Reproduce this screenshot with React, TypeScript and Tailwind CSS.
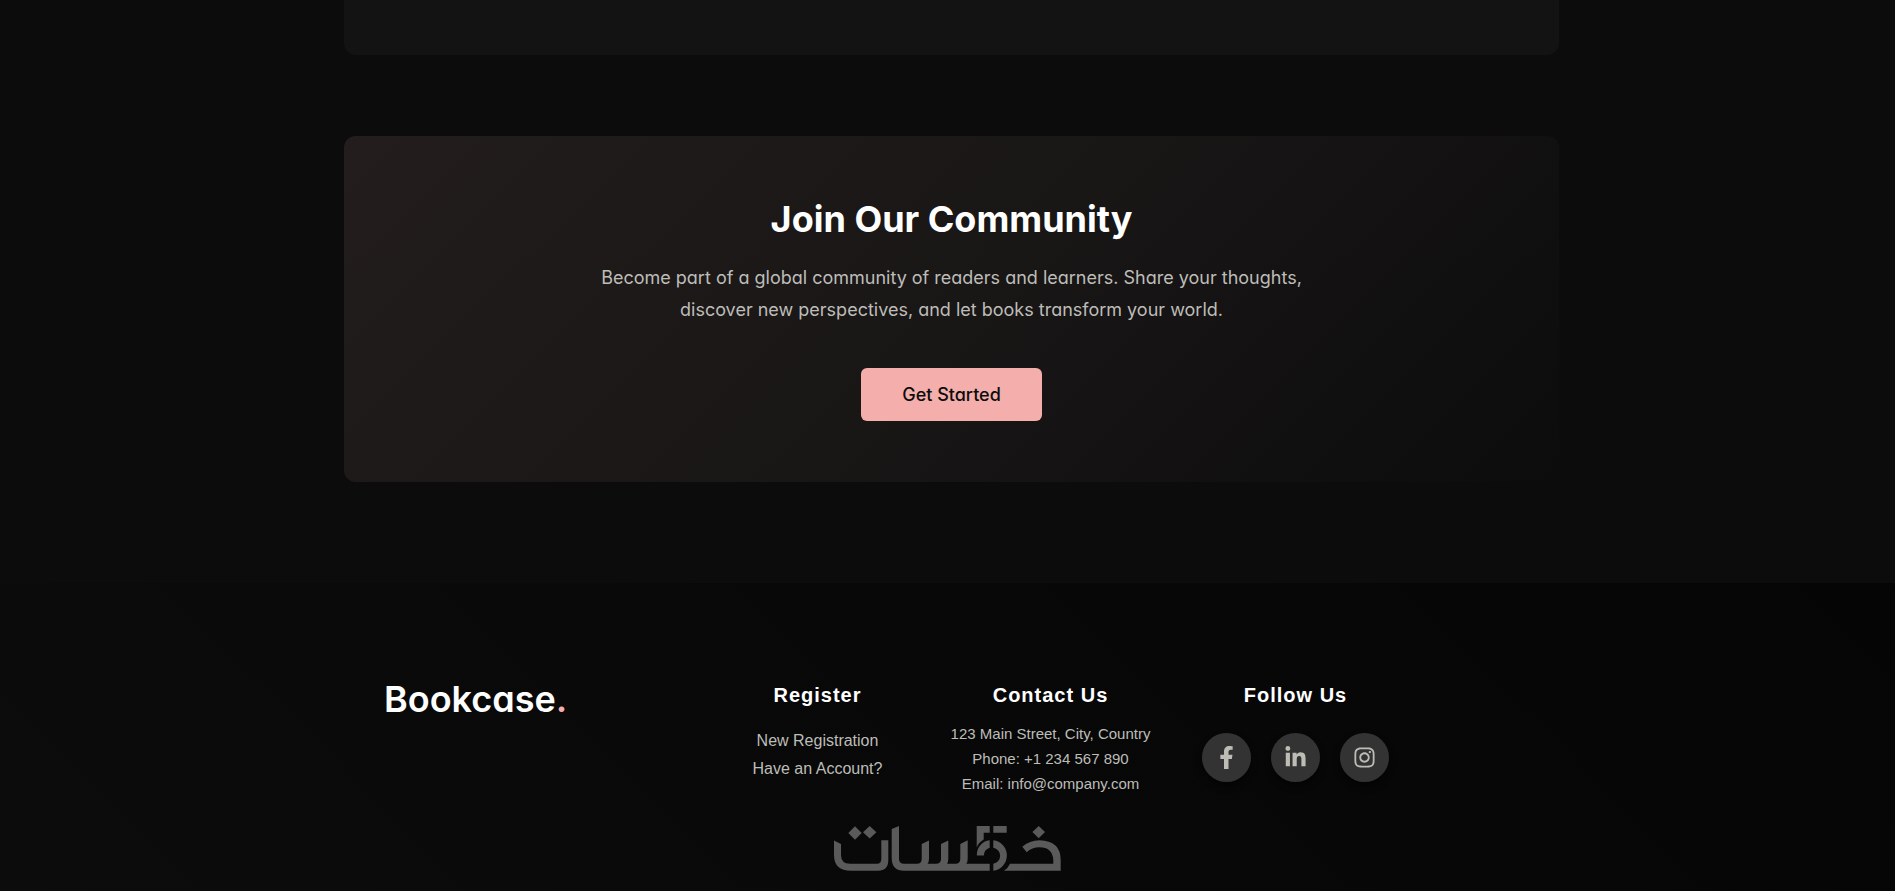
import { FaFacebookF, FaLinkedinIn, FaInstagram } from "react-icons/fa";

const registerLinks = [
  { href: "#register", label: "New Registration" },
  { href: "#login",    label: "Have an Account?" },
];

const contactLines = [
  "123 Main Street, City, Country",
  "Phone: +1 234 567 890",
  "Email: info@company.com",
];

const socials = [
  { href: "#facebook",  icon: FaFacebookF,  label: "Facebook" },
  { href: "#linkedin",  icon: FaLinkedinIn, label: "LinkedIn" },
  { href: "#instagram", icon: FaInstagram,  label: "Instagram" },
];

function Community() {
  return (
    <section className="rounded-xl bg-linear-135 from-[#231d1d] via-[#191616] to-[#0c0c0c] px-8 py-[61px] text-center font-[Inter,sans-serif] [font-feature-settings:'cv11']">
      <h2 className="text-4xl leading-11 font-bold text-white">Join Our Community</h2>
      <p className="mx-auto mt-[21px] max-w-[720px] text-lg leading-8 text-[#bdbdb8]">
        Become part of a global community of readers and learners. Share your thoughts, discover new perspectives, and let books transform your world.
      </p>
      <button className="mt-[42px] h-[53px] rounded-md bg-[#f4aeab] px-[41px] text-lg font-medium text-[#0c0c0c]">
        Get Started
      </button>
    </section>
  );
}

function KhamsatMark() {
  return (
    <svg viewBox="0 0 227 45" className="mx-auto h-[45px] w-[227px]" fill="#5a5a5a">
      {/* teh */}
      <path d="M0 14.5L7 18V29Q7 37.7 16 37.7H43Q47.3 37.7 47.3 33V14.3H54.3V34Q54.3 44.7 44 44.7H17Q0 44.7 0 29Z" />
      <path d="M21 .3L27.7 7 21 13.7 14.3 7ZM35.7 0L42.4 6.3 35.7 12.6 29 6.3Z" />
      {/* alef and seen share one baseline */}
      <path d="M57.7 3L65 0V33Q65 37.7 70 37.7H83Q87.7 37.7 87.7 33V18L95 14.5V33Q95 36 93.5 37.7H102Q107 37.7 107 33V18L114.3 14.5V33Q114.3 36 113 37.7H121.5Q126.3 37.7 126.3 33V18L133.7 14.3V33Q133.7 36 132.3 37.7H155.7V44.7H70Q57.7 44.7 57.7 32Z" />
      {/* five */}
      <path d="M142.7 0H155.7V6.7H149.7V13.5Q144.5 16.5 142.7 21.5ZM159.3 0H172.7V6.7H159.3Z" />
      <path d="M155.7 14.3A14.5 14.5 0 0 0 142.9 29.5H149.9Q150 23.5 155.7 21.7Z" />
      <path d="M159.3 14.3A15.3 15.3 0 0 1 159.3 44.7V37.7A8.1 8.1 0 0 0 159.3 21.7Z" />
      {/* khah */}
      <path d="M170 44.7Q174.2 42 176 37.7H219.3V34Q218.5 21.3 205.5 21.3Q198 21.3 192.7 26.3L188.3 20.8Q195.5 14.3 205.5 14.3Q226.7 15 226.7 34V44.7Z" />
      <path d="M204.7 0L211 6 204.7 12.3 198.4 6Z" />
    </svg>
  );
}

function Footer() {
  return (
    <footer className="grow bg-linear-45 from-[#0c0c0c] to-[#050505] font-['Liberation_Sans',sans-serif]">
      <div className="pl-2">
        <div className="mx-auto flex max-w-[1215px] gap-[50px] pt-[98px] pl-10">
          <div className="w-[302px] font-[Inter,sans-serif] text-4xl leading-9 font-semibold text-white [font-feature-settings:'cv11']">
            Bookcase<span className="text-[#f4aeab]">.</span>
          </div>
          <div className="w-[163px] text-center">
            <h3 className="text-xl font-bold tracking-[1px] text-white">Register</h3>
            <ul className="mt-[18px] leading-7 text-[#bdbdb8]">
              {registerLinks.map(({ href, label }) => (
                <li key={href}><a href={href}>{label}</a></li>
              ))}
            </ul>
          </div>
          <div className="w-[203px] text-center">
            <h3 className="text-xl font-bold tracking-[1px] text-white">Contact Us</h3>
            <div className="mt-3 text-[15px] leading-[25px] text-[#bdbdb8]">
              {contactLines.map(line => <p key={line}>{line}</p>)}
            </div>
          </div>
          <div className="text-center">
            <h3 className="text-xl font-bold tracking-[1px] text-white">Follow Us</h3>
            <div className="mt-6 flex gap-5">
              {socials.map(({ href, icon: Icon, label }) => (
                <a key={href} href={href} aria-label={label}
                  className="flex size-[49px] items-center justify-center rounded-full bg-[#333] text-[#bdbdb5] shadow-[0_4px_6px_#00000080]">
                  <Icon size={23} />
                </a>
              ))}
            </div>
          </div>
        </div>
      </div>
      <div className="pt-[30px] pb-[19px]">
        <KhamsatMark />
      </div>
    </footer>
  );
}

export default function App() {
  return (
    <div className="flex min-h-screen flex-col bg-[#0c0c0c]">
      <main className="pb-[101px] pl-2">
        <div className="mx-auto max-w-[1215px]">
          <div className="mb-[81px] h-[55px] rounded-b-xl bg-[#131313]" />
          <Community />
        </div>
      </main>
      <Footer />
    </div>
  );
}
